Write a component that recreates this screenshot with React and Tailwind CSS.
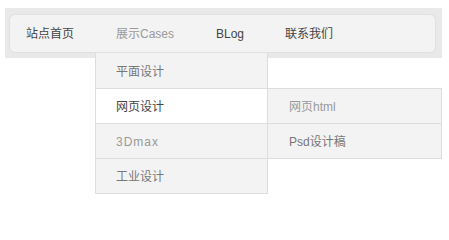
const font = { fontFamily: '"Liberation Sans", Arial, "Noto Sans CJK SC", sans-serif' };

const cases = [
  { label: '平面设计', cls: 'h-[36px] bg-[#f3f3f3] text-[#777]' },
  { label: '网页设计', cls: 'h-[35px] bg-white text-[#444]', sub: true },
  { label: '3Dmax', cls: 'h-[35px] bg-[#f3f3f3] text-[#999] tracking-[1px]' },
  { label: '工业设计', cls: 'h-[35px] bg-[#f3f3f3] text-[#777]' },
];

const sub = [
  { label: '网页html', cls: 'text-[#999]' },
  { label: 'Psd设计稿', cls: 'text-[#777]' },
];

function NavItem({ children, className = '', dropdown }) {
  return (
    <li className={`relative flex h-[37px] items-center pt-[1px] ${className}`}>
      {children}
      {dropdown}
    </li>
  );
}

export default function App() {
  return (
    <div className="h-[238px] w-[449px] overflow-hidden bg-white pt-[8px] pl-[5px] text-[12px]" style={font}>
      <div className="h-[50px] w-[437px] bg-[#e9e9e9] pt-[7px] pl-[5px]">
        <ul className="flex h-[37px] w-[425px] rounded-[5px] bg-[#f3f3f3] shadow-[0_0_2px_rgba(0,0,0,0.12)]">
          <NavItem className="w-[85px] pl-[16px] text-[#444]">站点首页</NavItem>
          <NavItem
            className="w-[100px] pl-[21px] text-[#999]"
            dropdown={
              <ul className="absolute left-0 top-[38px] z-10 w-[173px] border-x border-[#ddd]">
                {cases.map((c) => (
                  <li
                    key={c.label}
                    className={`relative flex items-center border-b border-[#ddd] pl-[20px] pt-[2px] ${c.cls}`}
                  >
                    {c.label}
                    {c.sub && (
                      <ul className="absolute left-full top-[-1px] w-[175px] border border-[#ddd] bg-[#f3f3f3]">
                        {sub.map((s, i) => (
                          <li
                            key={s.label}
                            className={`flex items-center pl-[21px] pt-[2px] ${i === 0 ? 'h-[35px] border-b border-[#ddd]' : 'h-[34px]'} ${s.cls}`}
                          >
                            {s.label}
                          </li>
                        ))}
                      </ul>
                    )}
                  </li>
                ))}
              </ul>
            }
          >
            展示Cases
          </NavItem>
          <NavItem className="w-[68px] pl-[21px] text-[#444]">BLog</NavItem>
          <NavItem className="pl-[22px] text-[#444]">联系我们</NavItem>
        </ul>
      </div>
    </div>
  );
}
